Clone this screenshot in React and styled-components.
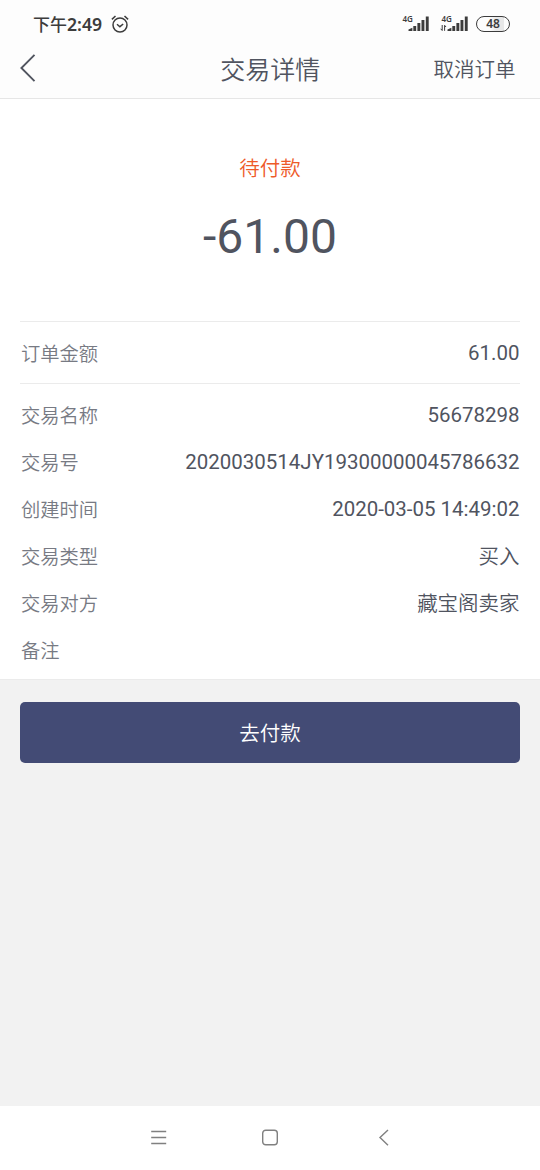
import React from "react";
import styled, { createGlobalStyle } from "styled-components";

const details = [
  { label: "交易名称", value: "56678298" },
  { label: "交易号", value: "2020030514JY19300000045786632" },
  { label: "创建时间", value: "2020-03-05 14:49:02" },
  { label: "交易类型", value: "买入", chinese: true },
  { label: "交易对方", value: "藏宝阁卖家", chinese: true },
  { label: "备注", value: "" }
];

function SignalIcon({ data }) {
  return (
    <svg width="29" height="20" viewBox="0 0 29 20">
      <Network x="1.5" y="8">4G</Network>
      <g fill="#3c3c3c">
        <path d="M7.5 17V15.6L11.4 13.8V17z" />
        <rect x="12.3" y="12" width="2.9" height="5" />
        <rect x="16.4" y="9" width="2.9" height="8" />
        <rect x="20.5" y="6" width="2.9" height="11" />
        <rect x="24.8" y="2.5" width="2.9" height="14.5" />
      </g>
      {data && (
        <path
          d="M2.2 11v5.5M0.7 14.8l1.5 1.7M4.6 16.8v-5.5M6 13L4.6 11.3"
          fill="none"
          stroke="#3c3c3c"
        />
      )}
    </svg>
  );
}

function App() {
  return (
    <Root>
      <GlobalStyle />
      <StatusBar>
        <Clock>
          下午<Digits>2:49</Digits>
        </Clock>
        <AlarmIcon viewBox="0 0 18 18">
          <circle cx="9" cy="10" r="7" />
          <path d="M0.9 4.4L4.5 1M17.1 4.4L13.5 1M6 9.2L8.9 11.7L12.2 9" />
        </AlarmIcon>
        <StatusIcons>
          <SignalIcon />
          <SignalIcon data />
          <Battery>48</Battery>
        </StatusIcons>
      </StatusBar>
      <Header>
        <BackButton aria-label="返回">
          <svg width="18" height="30" viewBox="0 0 18 30">
            <path d="M14.5 1.8L1.4 15L14.5 28.2" fill="none" stroke="#50545f" strokeWidth="1.9" />
          </svg>
        </BackButton>
        <Title>交易详情</Title>
        <CancelButton>取消订单</CancelButton>
      </Header>
      <Detail>
        <Summary>
          <Status>待付款</Status>
          <Amount>-61.00</Amount>
        </Summary>
        <OrderAmount>
          <Label>订单金额</Label>
          <Value>61.00</Value>
        </OrderAmount>
        <DetailList>
          {details.map(item => (
            <Row key={item.label}>
              <Label>{item.label}</Label>
              <Value $chinese={item.chinese}>{item.value}</Value>
            </Row>
          ))}
        </DetailList>
      </Detail>
      <Footer>
        <PayButton>去付款</PayButton>
      </Footer>
      <NavBar>
        <NavIcon viewBox="0 0 18 18">
          <path d="M1.2 2.5h15M1.2 8.5h15M1.2 14.5h15" />
        </NavIcon>
        <NavIcon viewBox="0 0 18 18">
          <rect x="0.7" y="1.2" width="14.6" height="14.6" rx="3" />
        </NavIcon>
        <NavIcon viewBox="0 0 18 18">
          <path d="M14 1L6 8.6L14 16.2" />
        </NavIcon>
      </NavBar>
    </Root>
  );
}

const GlobalStyle = createGlobalStyle`
  body {
    margin: 0;
  }
  button {
    padding: 0;
    border: 0;
    background: none;
    font: inherit;
    color: inherit;
  }
  svg {
    display: block;
  }
`;

const Root = styled.div`
  display: flex;
  flex-direction: column;
  width: 100vw;
  height: 100vh;
  background-color: #f2f2f2;
  color: #50545f;
  font-family: Roboto, "Noto Sans CJK SC", sans-serif;
  font-weight: 400;
`;

const StatusBar = styled.div`
  display: flex;
  align-items: center;
  box-sizing: border-box;
  height: 40px;
  padding: 8px 30px 0 33px;
  background-color: #fdfdfd;
  color: #3c3c3c;
`;

const Clock = styled.span`
  font-size: 17px;
  font-weight: 500;
  line-height: 32px;
`;

const Digits = styled.span`
  font-family: "Noto Sans", sans-serif;
  font-size: 17.6px;
  font-weight: 600;
`;

const AlarmIcon = styled.svg`
  width: 18px;
  height: 18px;
  margin-left: 8.5px;
  fill: none;
  stroke: #3c3c3c;
  stroke-width: 1.5;
`;

const StatusIcons = styled.div`
  display: flex;
  align-items: center;
  gap: 10px;
  margin-left: auto;
`;

const Network = styled.text`
  font-family: "Noto Sans", sans-serif;
  font-size: 8px;
  font-weight: 600;
  fill: #3c3c3c;
`;

const Battery = styled.div`
  box-sizing: border-box;
  width: 34px;
  height: 16px;
  margin-left: -3px;
  border: 1.5px solid #3c3c3c;
  border-radius: 8px;
  background: linear-gradient(90deg, #fdfdfd 40%, #e8e8e8 60%, #e8e8e8 85%, #fdfdfd 85%);
  font-family: "Noto Sans", sans-serif;
  font-size: 12px;
  font-weight: 600;
  line-height: 14px;
  text-align: center;
`;

const Header = styled.div`
  display: grid;
  grid-template-columns: 1fr auto 1fr;
  align-items: center;
  box-sizing: border-box;
  height: 59px;
  padding: 0 24.5px 2px 20px;
  border-bottom: 1px solid #e6e6e6;
  background-color: #fdfdfd;
  font-weight: 350;
`;

const BackButton = styled.button`
  justify-self: start;
`;

const Title = styled.span`
  margin: 0 -2.5px 0 2.5px;
  font-size: 25px;
`;

const CancelButton = styled.button`
  justify-self: end;
  font-size: 20.5px;
`;

const Detail = styled.div`
  padding: 0 20px;
  border-bottom: 1px solid #ebebeb;
  background-color: #fff;
`;

const Summary = styled.div`
  display: flex;
  flex-direction: column;
  align-items: center;
  box-sizing: border-box;
  height: 222px;
  padding-top: 55px;
`;

const Status = styled.span`
  color: #ee5a29;
  font-size: 20.5px;
  font-weight: 350;
  line-height: 30px;
`;

const Amount = styled.span`
  margin-top: 25px;
  font-size: 48px;
  line-height: 56px;
`;

const Row = styled.div`
  display: flex;
  align-items: center;
  justify-content: space-between;
  height: 47px;
`;

const OrderAmount = styled(Row)`
  box-sizing: border-box;
  height: 63px;
  padding-top: 1px;
  border: solid #ebebeb;
  border-width: 1px 0;
`;

const Label = styled.span`
  padding-left: 1px;
  color: #777a83;
  font-size: 19.3px;
  font-weight: 350;
`;

const Value = styled.span`
  padding-right: 0.5px;
  padding-bottom: ${props => (props.$chinese ? "2px" : "0")};
  font-size: 20.48px;
  font-weight: ${props => (props.$chinese ? 350 : 400)};
`;

const DetailList = styled.div`
  padding: 7px 0 6px;
`;

const Footer = styled.div`
  flex: 1;
  padding: 22px 20.4px;
`;

const PayButton = styled.button`
  width: 100%;
  height: 61px;
  padding-bottom: 1px;
  border-radius: 5px;
  background-color: #434b75;
  color: #fff;
  font-size: 20.5px;
  font-weight: 350;
`;

const NavBar = styled.div`
  display: flex;
  align-items: center;
  justify-content: space-between;
  box-sizing: border-box;
  height: 64px;
  padding: 0 148px 0 150px;
  background-color: #fff;
`;

const NavIcon = styled.svg`
  width: 18px;
  height: 18px;
  fill: none;
  stroke: #808080;
  stroke-width: 1.4;
`;

export default App;
